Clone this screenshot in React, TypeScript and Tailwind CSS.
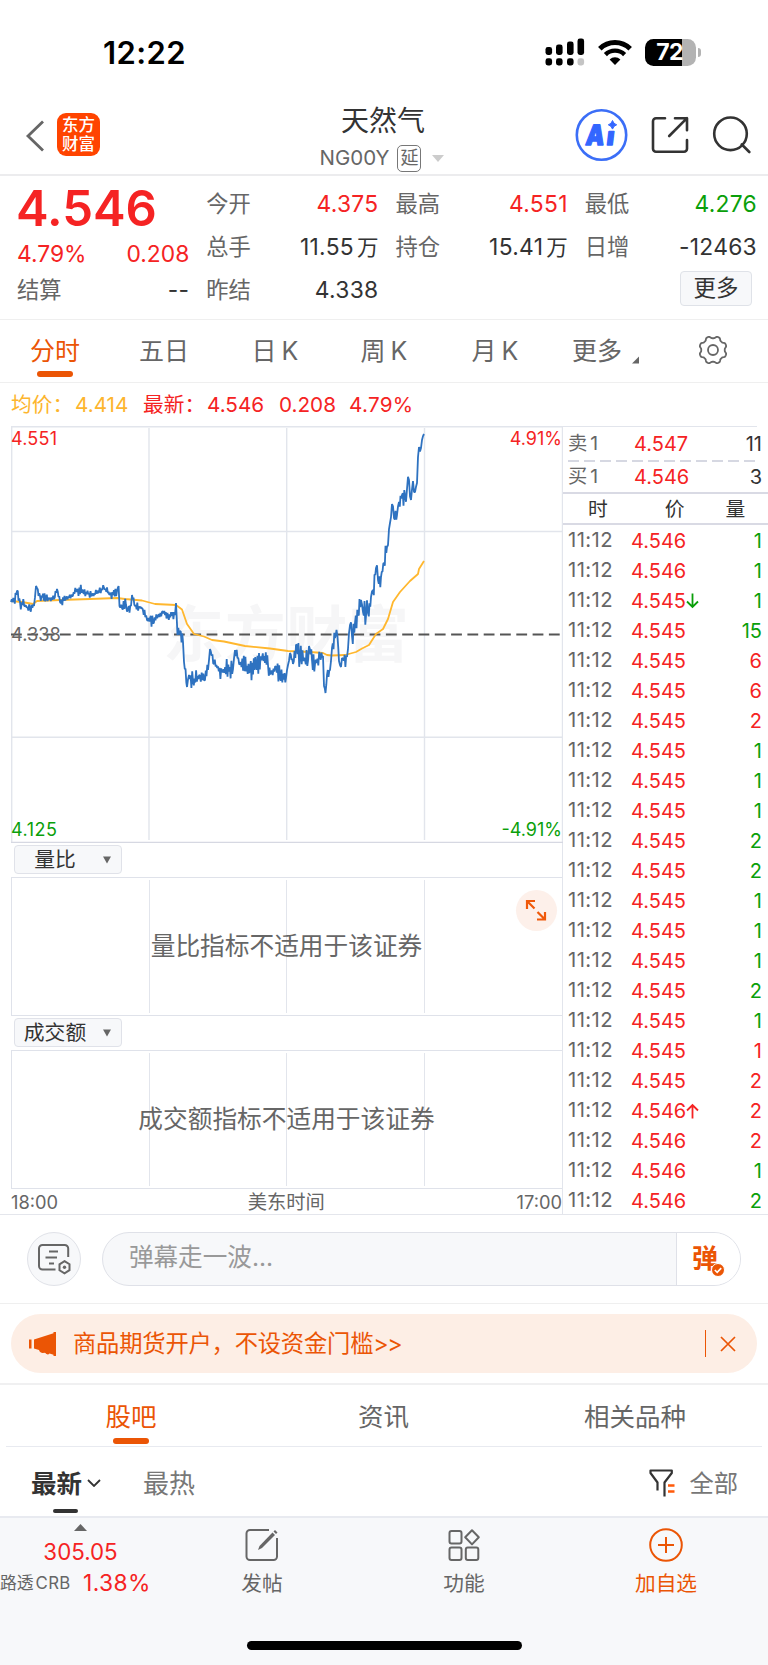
import React from "react";

const FONT = "font-['Inter','Noto_Sans_CJK_SC',sans-serif]";

/* ---------- status bar ---------- */

function StatusBar() {
  return (
    <div className="flex h-[92px] items-center justify-between pt-[12px] pr-[67px] pl-[103px]">
      <span className="text-[31px] leading-none font-semibold tracking-[0.4px] text-black">12:22</span>
      <div className="flex items-center">
        <svg className="h-[28px] w-[40px]" viewBox="0 0 40 28">
          {[
            [0.5, 9],
            [11, 6.5],
            [22, 3.5],
            [32.5, 0.5],
          ].map(([x, y], i) => (
            <g key={x}>
              <rect x={x} y={y} width="6.6" height={17 - y} rx="2.4" />
              <rect x={x} y="20.3" width="6.6" height="7.2" rx="2.4" fill={i === 3 ? "#c4c4c4" : "#000"} />
            </g>
          ))}
        </svg>
        <svg className="mx-[13px] h-[25px] w-[34px]" viewBox="0 0 34 25" fill="none" stroke="#000">
          <path d="M1.8 8.8a21.6 21.6 0 0 1 30.4 0" strokeWidth="5" />
          <path d="M7.4 14.6a13.6 13.6 0 0 1 19.2 0" strokeWidth="4.4" />
          <path d="M17 25l-5.4-5.6a7.8 7.8 0 0 1 10.8 0z" fill="#000" stroke="none" />
        </svg>
        <div className="flex h-[27px] w-[51px] items-center justify-center overflow-hidden rounded-[8.5px] bg-[linear-gradient(90deg,#000_72%,#b3b3b3_72%)]">
          <span className="mr-[2px] text-[23px] leading-none font-bold tracking-[-0.8px] text-white">72</span>
        </div>
        <div className="ml-[2px] h-[9px] w-[3px] rounded-r-full bg-[#b3b3b3]" />
      </div>
    </div>
  );
}

/* ---------- header ---------- */

function Header() {
  return (
    <header className="flex h-[84px] border-b-2 border-[#ececee]">
      <div className="flex w-[300px] pt-[21px] pl-[24px]">
        <svg className="mt-[7px] h-[32px] w-[22px]" viewBox="0 0 22 32" fill="none" stroke="#666" strokeWidth="2.8">
          <path d="M19 1.5L4 16l15 14.5" />
        </svg>
        <div className="ml-[11px] flex h-[43px] w-[43px] flex-col items-center justify-center rounded-[9px] bg-[#ff4400] text-[16.500px] leading-[19px] font-medium text-white">
          <span>东方</span>
          <span>财富</span>
        </div>
      </div>
      <div className="flex w-[166px] flex-col items-center pt-[11px]">
        <h1 className="text-[28px] leading-[36px] text-[#333]">天然气</h1>
        <div className="mt-[5px] flex h-[28px] items-center">
          <span className="mr-[8px] -ml-[2px] text-[20.500px] leading-none text-[#666]">NG00Y</span>
          <span className="flex h-[27px] w-[24px] items-center justify-center rounded-[5px] border-[1.5px] border-[#777] text-[18px] leading-none text-[#666]">
            延
          </span>
          <svg className="ml-[11px] h-[7px] w-[12px]" viewBox="0 0 12 7">
            <path d="M0 0h12L6 7z" fill="#ccc" />
          </svg>
        </div>
      </div>
      <div className="flex flex-1 items-start justify-end pt-[16px] pr-[17px]">
        <svg className="h-[54px] w-[53px]" viewBox="0 0 53 54">
          <circle cx="26.5" cy="27" r="24.7" fill="#fff" stroke="#3b6ef7" strokeWidth="2.6" />
          <g transform="translate(4 0) skewX(-7)" fill="#3366ff" stroke="#3366ff" strokeWidth="1.4" strokeLinejoin="round" fontWeight="900">
            <text x="10.500" y="37" fontSize="28" textLength="18.500" lengthAdjust="spacingAndGlyphs">A</text>
            <text x="31.500" y="37" fontSize="25">ı</text>
          </g>
          <path d="M37.500 12.500q1 3.500 4.200 4.300q-3.200 1-4.200 4.300q-1-3.300-4.200-4.300q3.200-.800 4.200-4.300z" fill="#3366ff" stroke="#3366ff" />
        </svg>
        <svg className="mt-[8px] ml-[23px] h-[38px] w-[38px]" viewBox="0 0 38 38" fill="none" stroke="#333" strokeWidth="2.6" strokeLinecap="round">
          <path d="M14 2.200H5a3 3 0 0 0-3 3v27.500a3 3 0 0 0 3 3h28a3 3 0 0 0 3-3V24" />
          <path d="M24 2.200h12v12M36 2.200L18.200 20" strokeLinejoin="round" />
        </svg>
        <svg className="mt-[8px] ml-[23px] h-[38px] w-[39px]" viewBox="0 0 39 38" fill="none" stroke="#333" strokeWidth="2.6" strokeLinecap="round">
          <circle cx="18.500" cy="17.800" r="16.300" />
          <path d="M29.800 28.500l7.500 7.500" />
        </svg>
      </div>
    </header>
  );
}

/* ---------- quote summary ---------- */

function Stat({ label, value, color = "text-[#333]", unit }: { label: string; value: string; color?: string; unit?: string }) {
  return (
    <div className="flex h-[43px] items-center justify-between">
      <span className="text-[22.3px] leading-none text-[#666]">{label}</span>
      <span className={`flex items-center text-[22.8px] leading-none tracking-[0.300px] ${color}`}>
        {value}
        {unit && <span className="ml-[3px] text-[21.500px] tracking-normal">{unit}</span>}
      </span>
    </div>
  );
}

function Summary() {
  return (
    <section className="grid h-[144px] grid-cols-4 gap-x-[17px] border-b border-[#efefef] pt-[7px] pr-[11px] pl-[17px]">
      <div>
        <div className="flex h-[50px] items-center text-[49px] leading-none font-semibold text-[#f52323]">
          <span className="-ml-[1px]">4.546</span>
        </div>
        <div className="flex h-[42px] items-center justify-between text-[22.8px] leading-none text-[#f52323]">
          <span>4.79%</span>
          <span>0.208</span>
        </div>
        <div className="-mt-[6px]">
          <Stat label="结算" value="--" />
        </div>
      </div>
      <div>
        <Stat label="今开" value="4.375" color="text-[#f52323]" />
        <Stat label="总手" value="11.55" unit="万" />
        <Stat label="昨结" value="4.338" />
      </div>
      <div>
        <Stat label="最高" value="4.551" color="text-[#f52323]" />
        <Stat label="持仓" value="15.41" unit="万" />
      </div>
      <div>
        <Stat label="最低" value="4.276" color="text-[#0a9f0a]" />
        <Stat label="日增" value="-12463" />
        <div className="mt-[2px] flex justify-end pr-[5px]">
          <button className="h-[35px] w-[72px] rounded-[4px] border-[1.5px] border-[#dfe2e8] bg-[#f7f8fa] text-[22.500px] leading-none text-[#333]">
            更多
          </button>
        </div>
      </div>
    </section>
  );
}

/* ---------- period tabs ---------- */

function Gear() {
  const pts: string[] = [];
  for (let i = 0; i <= 96; i++) {
    const a = (i / 96) * Math.PI * 2;
    const r = 12.8 + 1.1 * Math.tanh(1.8 * Math.cos(a * 8 + Math.PI));
    pts.push(`${(15 + r * Math.cos(a)).toFixed(2)},${(15 + r * Math.sin(a)).toFixed(2)}`);
  }
  return (
    <svg className="h-[30px] w-[30px]" viewBox="0 0 30 30" fill="none" stroke="#666" strokeWidth="1.8">
      <polygon points={pts.join(" ")} strokeLinejoin="round" />
      <circle cx="15" cy="15" r="5" />
    </svg>
  );
}

function PeriodTabs() {
  return (
    <nav className="flex h-[63px] border-b border-[#efefef] text-[25px] leading-none text-[#666]">
      <div className="flex w-[110px] flex-col items-center pt-[19px] text-[#eb5505]">
        <span>分时</span>
        <span className="mt-[7px] h-[6px] w-[36px] rounded-full bg-[#eb5505]" />
      </div>
      <span className="w-[108px] pt-[19px] text-center">五日</span>
      <span className="w-[113px] pt-[19px] text-center tracking-[-1px]">日 K</span>
      <span className="w-[105px] pt-[19px] text-center tracking-[-1px]">周 K</span>
      <span className="w-[117px] pt-[19px] text-center tracking-[-1px]">月 K</span>
      <div className="flex w-[111px] pt-[19px] pl-[19px]">
        <span>更多</span>
        <svg className="mt-[17px] ml-[10px] h-[8px] w-[7px]" viewBox="0 0 8 8">
          <path d="M8 0v8H0z" fill="#666" />
        </svg>
      </div>
      <div className="pt-[15px] pl-[34px]">
        <Gear />
      </div>
    </nav>
  );
}

/* ---------- intraday chart ---------- */

// x, y, jitter amplitude
const PRICE: [number, number, number][] = [
  [11, 602, 2], [14, 600, 3], [17, 591, 1], [20, 602, 3], [25, 606, 2], [30, 609, 2], [34, 606, 2], [36, 586, 1],
  [37, 588, 1], [40, 596, 3], [46, 598, 2], [54, 599, 2], [57, 589, 1], [60, 602, 3], [66, 598, 2], [72, 596, 2],
  [77, 590, 3], [83, 592, 3], [92, 595, 2], [99, 592, 2], [104, 588, 2], [110, 594, 2.500], [117, 591, 2],
  [118.6, 586, 1], [119.500, 606, 2], [122, 608, 4], [126, 605, 3], [128, 609, 3], [131, 606, 2], [132, 595, 1], [135, 606, 2],
  [142, 608, 2], [147, 620, 3], [150, 618, 3], [153, 623, 3], [158, 616, 2], [162, 612, 2], [168, 615, 2],
  [175, 615, 3], [176, 603, 1], [177.500, 635, 3], [180, 631, 3], [183, 642, 4], [184, 662, 3], [187, 687, 3],
  [189, 675, 8], [193, 681, 5], [200, 676, 5], [205, 680, 4], [208, 670, 3], [210, 649, 1], [214, 664, 4],
  [222, 671, 4], [233, 669, 6], [235, 650, 2], [240, 664, 6], [250, 669, 5], [256, 667, 5], [262, 658, 4],
  [268, 665, 5], [271, 673, 5], [276, 667, 5], [280, 678, 5], [286, 678, 5], [288, 665, 4], [290, 653, 4],
  [293, 664, 5], [296, 645, 3], [300, 658, 6], [305, 660, 6], [308, 661, 4], [309, 646, 2], [312, 660, 6],
  [315, 664, 5], [320, 657, 5], [323, 656, 2], [324, 686, 2], [325.500, 693, 3], [327, 675, 2], [330, 670, 2],
  [332, 648, 4], [335, 638, 4], [336.500, 630, 1], [337.500, 637, 2], [339, 661, 3], [341, 667, 4], [343, 659, 4],
  [347, 657, 4], [349, 633, 2], [350, 625, 2], [352, 636, 5], [355, 623, 5], [358, 614, 6], [361, 600, 4],
  [363, 612, 6], [366, 616, 5], [368, 613, 7], [371, 597, 4], [373, 590, 5], [376, 568, 3], [378, 580, 5],
  [381, 577, 7], [384, 563, 5], [387, 547, 6], [388, 545, 6], [390, 523, 4], [392, 504, 3], [394, 518, 7],
  [397, 515, 7], [399, 502, 5], [402, 495, 6], [405, 495, 6], [407, 489, 5], [409, 480, 3], [411, 500, 3],
  [413, 481, 3], [415, 492, 2], [417, 483, 2], [418, 457, 2], [419, 447, 6], [421, 448, 5], [422, 440, 3], [424, 434, 1],
];

const AVERAGE =
  "11,601 22,602 33,604 37,601 60,600 90,599 117,598 125,599 142,600.500 155,604 176,605 182,609.500 187,624 194,634 204,636.500 212,640 224,641.500 245,646 270,648.500 288,651 310,652 323,653 327,655 332,655.500 345,655 356,652 362,648.500 369,645 376,634 383,629 388,619 393,602 400,592 410,581 418,574 419,569 424,561";

function priceLine() {
  const out: string[] = [];
  let seed = 7;
  let sign = 1;
  for (let i = 0; i < PRICE.length - 1; i++) {
    const [x0, y0, a0] = PRICE[i];
    const [x1, y1, a1] = PRICE[i + 1];
    out.push(`${x0},${y0}`);
    const n = Math.floor((x1 - x0) / 0.75);
    for (let k = 1; k < n; k++) {
      const t = k / n;
      seed = (seed * 1103515245 + 12345) % 2147483648;
      sign = -sign;
      const u = seed / 2147483648;
      const j = sign * (0.2 + 1.5 * u * u) * (a0 + (a1 - a0) * t) * 1.4;
      out.push(`${(x0 + (x1 - x0) * t).toFixed(1)},${(y0 + (y1 - y0) * t + j).toFixed(1)}`);
    }
  }
  out.push("424,434");
  return out.join(" ");
}

function PriceChart() {
  return (
    <svg className="block h-[417px] w-[563px]" viewBox="0 426 563 417">
      <text x="163" y="657" fontSize="61" fontWeight="700" fill="#f6f6f7" textLength="246">
        东方财富
      </text>
      <g stroke="#e2e5ec" strokeWidth="1.4" fill="none">
        <path d="M11 426.700H563M11.700 426V842M562.500 426V843M11 531.500H562M11 737.300H562" />
        <path d="M149 428V840M286.700 428V840M424.500 428V840" />
        <path d="M11 842.500H563" stroke="#d6d8e2" />
      </g>
      <path d="M11 634.500H563" stroke="#555" strokeWidth="2" strokeDasharray="10.800 5.500" />
      <polyline points={AVERAGE} fill="none" stroke="#ffb72e" strokeWidth="1.8" strokeLinejoin="round" />
      <polyline points={priceLine()} fill="none" stroke="#2e72c0" strokeWidth="1.8" strokeLinejoin="bevel" />
      <g fontSize="18">
        <text x="11" y="444.500" fill="#f52323" textLength="46">4.551</text>
        <text x="562" y="444.500" fill="#f52323" textAnchor="end">4.91%</text>
        <text x="11" y="640.500" fill="#666" fontSize="18.300">4.338</text>
        <text x="11" y="835.500" fill="#0a9f0a" textLength="46">4.125</text>
        <text x="562" y="835.500" fill="#0a9f0a" textAnchor="end">-4.91%</text>
      </g>
    </svg>
  );
}

function IndicatorPanel({ name, message, expand }: { name: string; message: string; expand?: boolean }) {
  return (
    <div className="h-[173px] border-r-[1.500px] border-[#e2e5ec]">
      <div className="flex h-[34px] pt-[2px] pl-[14px]">
        <button className="flex h-[29px] w-[108px] items-center rounded-[4px] border-[1.500px] border-[#e0e2e9] bg-[#f7f8fa] pt-[2px] text-[#333]">
          <span className="w-[80px] text-center text-[20.800px] leading-none">{name}</span>
          <svg className="mb-[2px] ml-[8px] h-[8px] w-[8px]" viewBox="0 0 9 8">
            <path d="M0 0h9L4.500 8z" fill="#666" />
          </svg>
        </button>
      </div>
      <div className="relative ml-[11px] grid h-[139px] grid-cols-4 border-y-[1.500px] border-l-[1.500px] border-[#dfe2ea] py-[2px]">
        <span className="border-r-[1.500px] border-[#e2e5ec]" />
        <span className="border-r-[1.500px] border-[#e2e5ec]" />
        <span className="border-r-[1.500px] border-[#e2e5ec]" />
        <span />
        <span className="absolute inset-0 flex items-center justify-center pr-[1px] text-[24.700px] leading-none text-[#666]">{message}</span>
        {expand && (
          <span className="absolute top-[12px] right-[5px] flex h-[41px] w-[41px] items-center justify-center rounded-full bg-[#fdf0ea]">
            <svg className="mr-[1px] mb-[1px] h-[22px] w-[22px]" viewBox="0 0 22 22" fill="none" stroke="#f0590a" strokeWidth="2.200">
              <path d="M2 10V2h8M2.500 2.500l7 7M20 13v7.500h-8M19.500 20l-7-7" />
            </svg>
          </span>
        )}
      </div>
    </div>
  );
}

/* ---------- ticks ---------- */

const R = "text-[#f52323]";
const G = "text-[#0a9f0a]";
const TICKS: [string, string, string, string?][] = [
  ["4.546", "1", G], ["4.546", "1", G], ["4.545", "1", G, "down"], ["4.545", "15", G], ["4.545", "6", R],
  ["4.545", "6", R], ["4.545", "2", R], ["4.545", "1", G], ["4.545", "1", G], ["4.545", "1", G],
  ["4.545", "2", G], ["4.545", "2", G], ["4.545", "1", G], ["4.545", "1", G], ["4.545", "1", G],
  ["4.545", "2", G], ["4.545", "1", G], ["4.545", "1", R], ["4.545", "2", R], ["4.546", "2", R, "up"],
  ["4.546", "2", R], ["4.546", "1", G], ["4.546", "2", G],
];

function Quote({ side, price, qty }: { side: string; price: string; qty: string }) {
  return (
    <div className="flex h-[33px] shrink-0 items-center pr-[6px] pl-[5px] text-[20px] leading-none">
      <span className="w-[66px] text-[19.300px] text-[#666]">
        {side}
        <span className="ml-[3px]">1</span>
      </span>
      <span className="text-[#f52323]">{price}</span>
      <span className="ml-auto text-[#333]">{qty}</span>
    </div>
  );
}

function Ticks() {
  return (
    <aside className="h-[789px] w-[205px]">
      <div className="flex h-[66px] flex-col overflow-hidden">
        <div className="mr-[11px] h-[1.400px] shrink-0 bg-[#e2e5ec]" />
        <Quote side="卖" price="4.547" qty="11" />
        <div className="mr-[11px] ml-[5px] h-[2px] shrink-0 bg-[repeating-linear-gradient(90deg,#d6d8e2_0_11px,transparent_11px_16px)]" />
        <div className="-mt-[2px]">
          <Quote side="买" price="4.546" qty="3" />
        </div>
      </div>
      <div className="flex h-[33px] items-center border-y-2 border-[#d9dae4] pt-[2px] text-[19.800px] leading-none text-[#333]">
        <span className="ml-[25px]">时</span>
        <span className="ml-[57px]">价</span>
        <span className="ml-[41px]">量</span>
      </div>
      <div className="pt-[0.500px]">
        {TICKS.map(([price, qty, color, dir], i) => (
          <div key={i} className="flex h-[30px] items-center pr-[6px] pl-[5px] text-[20px] leading-none">
            <span className="w-[63px] text-[20.300px] tracking-[0.400px] text-[#666]">11:12</span>
            <span className={R}>{price}</span>
            {dir && (
              <svg
                className="h-[16px] w-[13px]"
                viewBox="0 0 13 16"
                fill="none"
                stroke={dir === "up" ? "#f52323" : "#0a9f0a"}
                strokeWidth="1.800"
              >
                <path d={dir === "up" ? "M6.500 15.500V2M1 7.500L6.500 2 12 7.500" : "M6.500 .5V14M1 8.500L6.500 14 12 8.500"} />
              </svg>
            )}
            <span className={`ml-auto ${color}`}>{qty}</span>
          </div>
        ))}
      </div>
    </aside>
  );
}

/* ---------- comment bar and banner ---------- */

function CommentBar() {
  return (
    <section className="flex h-[90px] items-center border-t-[1.500px] border-b border-t-[#e4e6ec] border-b-[#efefef] pr-[27px] pl-[27px]">
      <div className="flex h-[54px] w-[54px] items-center justify-center rounded-full border-[1.500px] border-[#e0e2e8] bg-[#f7f8fa]">
        <svg className="h-[32px] w-[34px]" viewBox="0 0 34 32" fill="none" stroke="#666" strokeWidth="2">
          <path d="M18.500 26.500H5.500A3.500 3.500 0 0 1 2 23V5.500A3.500 3.500 0 0 1 5.500 2h22.200A3.500 3.500 0 0 1 31.200 5.500V14" />
          <path d="M12 8.500h9M8.500 14.500h11.500M12 20.500h5" />
          <path d="M27.500 18.200l5 3v6L27.500 30.300l-5-3v-6z" />
          <circle cx="27.500" cy="24.200" r="1.700" fill="#666" stroke="none" />
        </svg>
      </div>
      <div className="ml-[21px] flex h-[54px] w-[640px] overflow-hidden rounded-full border-[1.500px] border-[#dfe1e8] bg-[#f7f8fa]">
        <span className="flex-1 pt-[12px] pl-[26px] text-[24.600px] leading-none text-[#999]">弹幕走一波...</span>
        <div className="flex w-[64px] border-l-[1.500px] border-[#dfe1e8] bg-white pt-[13px] pl-[15px]">
          <span className="text-[26px] leading-none font-bold text-[#eb5505]">弹</span>
          <svg className="mt-[17px] -ml-[7px] h-[14px] w-[14px] shrink-0" viewBox="0 0 14 14">
            <circle cx="7" cy="7" r="6.500" fill="#eb5505" stroke="#fff" />
            <path d="M3.800 7l2.400 2.400 4-4.300" fill="none" stroke="#fff" strokeWidth="1.600" />
          </svg>
        </div>
      </div>
    </section>
  );
}

function Banner() {
  return (
    <section className="h-[81px] border-b-2 border-[#f0f0f1] px-[11px] pt-[10px]">
      <div className="flex h-[59px] items-center rounded-full bg-[#fdeee5] pr-[21px] pl-[18px] text-[#eb5505]">
        <svg className="h-[24px] w-[28px]" viewBox="0 0 28 24" fill="#eb5505">
          <path d="M0 7.500h2.500v9H0zM5 7.500L24.500 1.200V0h2.500v24h-2.500v-1.200l-4-1.300c-1 1.500-3 1.200-4-.5l-1.500-.3c-1.500.800-4 .300-5-2.700L5 16.500z" />
        </svg>
        <span className="ml-[16px] text-[23.300px] leading-none tracking-[-0.200px]">
          商品期货开户，不设资金门槛<span className="tracking-[-1.500px]">&gt;&gt;</span>
        </span>
        <span className="ml-auto h-[27px] w-[1.500px] bg-[#eb5505]" />
        <svg className="ml-[14px] h-[16px] w-[16px]" viewBox="0 0 16 16" fill="none" stroke="#eb5505" strokeWidth="1.700">
          <path d="M1 1l14 14M15 1L1 15" />
        </svg>
      </div>
    </section>
  );
}

/* ---------- community ---------- */

function Community() {
  return (
    <>
      <nav className="mx-[6px] flex h-[62px] border-b-[1.500px] border-[#e8eaf0] text-[25.500px] leading-none text-[#666]">
        <div className="flex w-[250px] flex-col items-center pt-[19px] text-[#eb5505]">
          <span>股吧</span>
          <span className="mt-[8px] h-[6px] w-[36px] rounded-full bg-[#eb5505]" />
        </div>
        <span className="w-[255px] pt-[19px] text-center">资讯</span>
        <span className="w-[248px] pt-[19px] text-center">相关品种</span>
      </nav>
      <div className="flex h-[69px] pt-[24px] pr-[30px] pl-[31px] text-[25.500px] leading-none">
        <div className="flex w-[112px] flex-col">
          <div className="flex items-center">
            <span className="font-bold text-[#333]">最新</span>
            <svg className="mb-[2px] ml-[5px] h-[8px] w-[14px]" viewBox="0 0 14 8" fill="none" stroke="#333" strokeWidth="1.800">
              <path d="M1 1l6 6 6-6" />
            </svg>
          </div>
          <span className="mt-[12px] ml-[22px] h-[4px] w-[25px] rounded-[2px] bg-[#333]" />
        </div>
        <span className="text-[26px] text-[#777]">最热</span>
        <svg className="-mt-[2px] ml-auto h-[28px] w-[26px]" viewBox="0 0 26 28" fill="none" stroke="#333" strokeWidth="2.200">
          <path d="M8.500 21.500V13.500L1.500 4V1.500h21.300V4L15.500 13.500V27.500" strokeLinejoin="round" />
          <path d="M19 16.500h6.500M19 22.500h6.500" stroke="#ff5a0a" strokeWidth="2.600" />
        </svg>
        <span className="ml-[14px] text-[24.300px] text-[#777]">全部</span>
      </div>
    </>
  );
}

function BottomItem({ label, children, active, width }: { label: string; children: React.ReactNode; active?: boolean; width: string }) {
  return (
    <div className={`flex flex-col items-center pt-[10px] ${width} ${active ? "text-[#eb5505]" : "text-[#666]"}`}>
      {children}
      <span className="mt-[12px] text-[20.700px] leading-none">{label}</span>
    </div>
  );
}

function BottomBar() {
  return (
    <footer className="flex flex-1 flex-col border-t-2 border-[#e8eaf0] bg-[#f7f8fa]">
      <div className="flex h-[123px]">
        <div className="w-[161px] pt-[6px]">
          <svg className="ml-[74px] h-[7px] w-[13px]" viewBox="0 0 13 7">
            <path d="M6.500 0L13 7H0z" fill="#666" />
          </svg>
          <div className="mt-[10px] w-[161px] text-center text-[22.300px] leading-none text-[#f52323]">305.05</div>
          <div className="mt-[9px] flex items-center leading-none whitespace-nowrap">
            <span className="flex w-[71px] items-center text-[16.800px] text-[#666]">
              路透<span className="ml-[2px] tracking-[0.300px]">CRB</span>
            </span>
            <span className="ml-[12px] text-[22.800px] tracking-[0.400px] text-[#f52323]">1.38%</span>
          </div>
        </div>
        <BottomItem label="发帖" width="w-[202px]">
          <svg className="h-[34px] w-[34px]" viewBox="0 0 34 34" fill="none" stroke="#666" strokeWidth="2">
            <path d="M24 2H5a3.500 3.500 0 0 0-3.500 3.500v23A3.500 3.500 0 0 0 5 32h23.500a3.500 3.500 0 0 0 3.500-3.500V10" />
            <path d="M13 22l1.500-4L27.500 4.500l2.500 2.500L17 20z" fill="#666" stroke="none" />
            <path d="M28.500 3.500l1.500-1.500 2.500 2.500L31 6z" fill="#666" stroke="none" />
          </svg>
        </BottomItem>
        <BottomItem label="功能" width="w-[202px]">
          <svg className="h-[34px] w-[34px]" viewBox="0 0 34 34" fill="none" stroke="#666" strokeWidth="2">
            <rect x="2.500" y="3" width="12" height="12.500" rx="2" />
            <path d="M25 2.200l6.800 7.100-6.800 7.100-6.800-7.100z" strokeLinejoin="round" />
            <rect x="2.500" y="19.500" width="12" height="12.500" rx="2" />
            <rect x="18.800" y="19.500" width="12.500" height="12.500" rx="2" />
          </svg>
        </BottomItem>
        <BottomItem label="加自选" active width="w-[202px]">
          <svg className="h-[34px] w-[34px]" viewBox="0 0 34 34" fill="none" stroke="#eb5505" strokeWidth="2">
            <circle cx="17" cy="17" r="15.800" />
            <path d="M17 9v16M9 17h16" />
          </svg>
        </BottomItem>
      </div>
      <div className="mx-auto h-[9px] w-[275px] rounded-full bg-black" />
    </footer>
  );
}

export default function App() {
  return (
    <main className={`flex h-[1665px] w-[768px] flex-col overflow-hidden bg-white ${FONT}`}>
      <StatusBar />
      <Header />
      <Summary />
      <PeriodTabs />
      <div className="flex h-[43px] shrink-0 items-center pt-[1px] pl-[11px] text-[20.700px] leading-none whitespace-nowrap">
        <span className="w-[64px] text-[#fdb52e]">均价：</span>
        <span className="w-[68px] text-[#fdb52e]">4.414</span>
        <span className="w-[64px] text-[#f52323]">最新：</span>
        <span className="w-[72px] text-[#f52323]">4.546</span>
        <span className="w-[70px] text-[#f52323]">0.208</span>
        <span className="tracking-[0.300px] text-[#f52323]">4.79%</span>
      </div>
      <div className="flex h-[788px] shrink-0">
        <div className="w-[563px]">
          <PriceChart />
          <IndicatorPanel name="量比" message="量比指标不适用于该证券" expand />
          <IndicatorPanel name="成交额" message="成交额指标不适用于该证券" />
          <div className="flex h-[25px] items-center justify-between border-r border-[#e2e5ec] pt-[2px] pl-[11px] text-[18.300px] leading-none text-[#666]">
            <span>18:00</span>
            <span className="pr-[2px] text-[19.300px]">美东时间</span>
            <span>17:00</span>
          </div>
        </div>
        <Ticks />
      </div>
      <CommentBar />
      <Banner />
      <Community />
      <BottomBar />
    </main>
  );
}
